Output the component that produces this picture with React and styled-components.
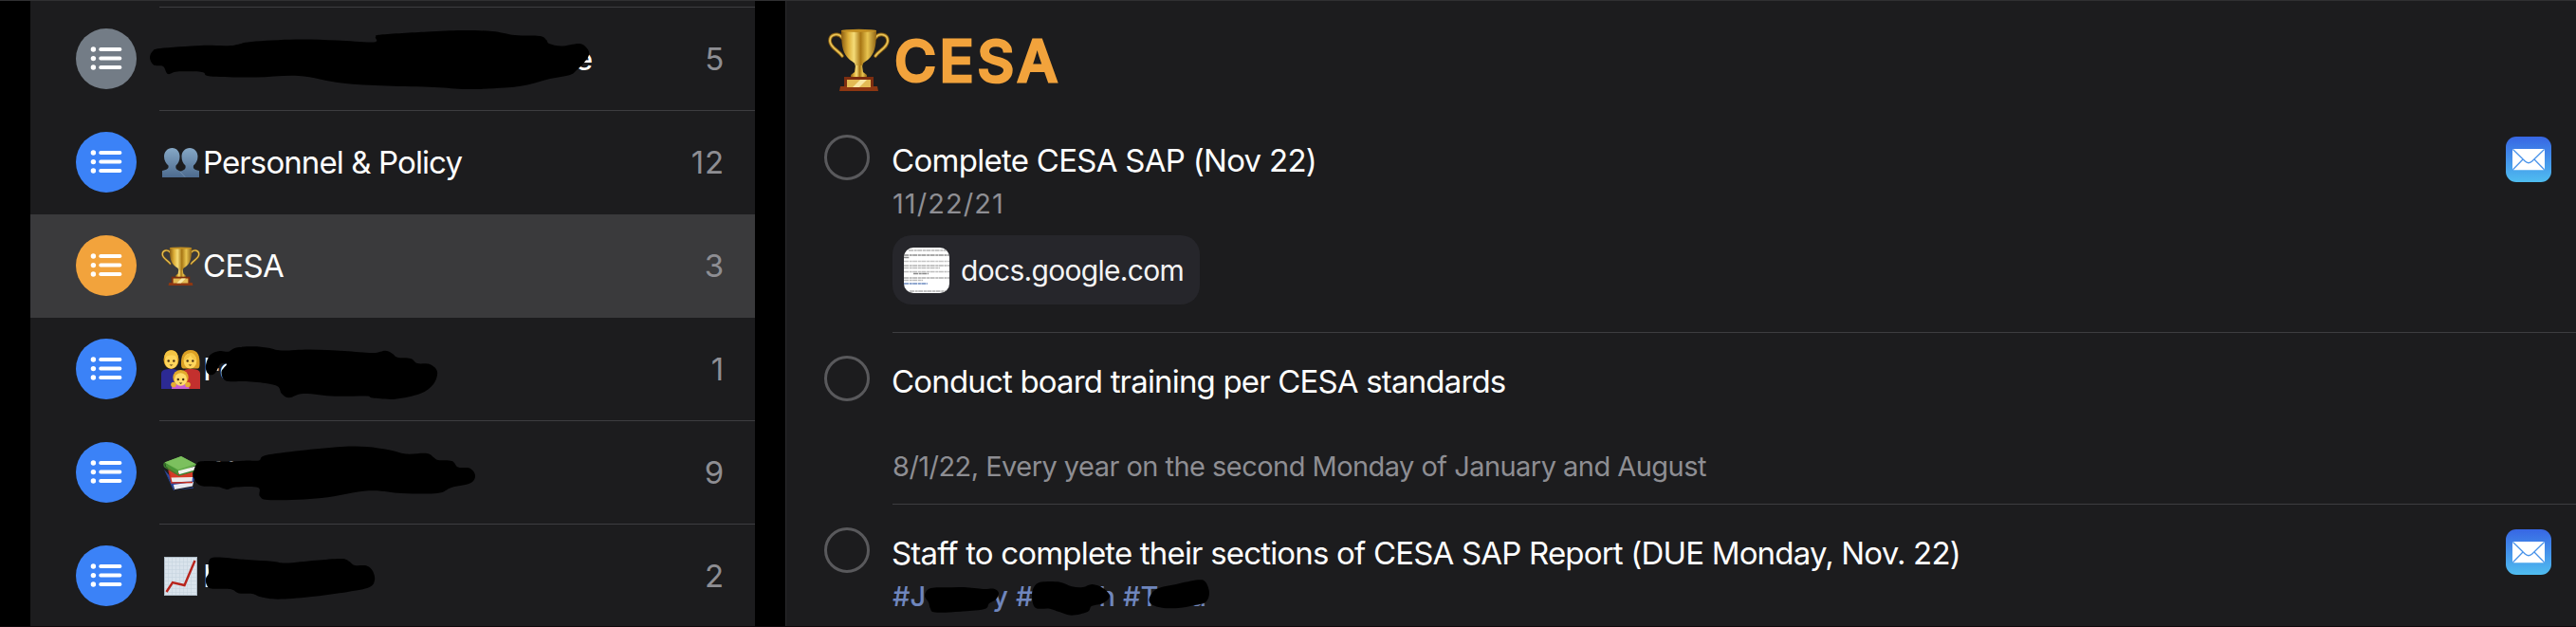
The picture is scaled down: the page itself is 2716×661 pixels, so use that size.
import React from 'react';
import styled, { createGlobalStyle, ThemeProvider } from 'styled-components';

const theme = {
  background: '#1c1c1e',
  selected: '#3a3a3c',
  line: '#3d3d40',
  grey: '#8e8e93',
  orange: '#f2a33c',
  blue: '#3b82f7',
  slate: '#737c86',
  tag: '#6f86bd',
};

const GlobalStyle = createGlobalStyle`
  * {
    box-sizing: border-box;
  }
  body {
    margin: 0;
    background-color: #000;
    font-family: Inter, "Liberation Sans", sans-serif;
    overflow: hidden;
  }
`;

const Flex = styled.div`
  display: flex;
  flex-direction: ${(props) => (props.$col ? 'column' : 'row')};
`;

const Screen = styled(Flex)`
  width: 100vw;
  height: 661px;
  overflow: hidden;
  padding-left: 32px;
  border-top: 1px solid #303032;
  border-bottom: 1px solid #0f080b;
`;

/* ---------- sidebar ---------- */

const Sidebar = styled(Flex)`
  flex: none;
  width: 764px;
  background-color: ${(props) => props.theme.background};
`;

const SidebarTop = styled.div`
  flex: none;
  height: 7px;
  margin-left: 136px;
  border-bottom: 1px solid ${(props) => props.theme.line};
`;

const ListRow = styled(Flex)`
  position: relative;
  flex: none;
  height: 109px;
  padding-left: 48px;
  background-color: ${(props) =>
    props.$selected ? props.theme.selected : 'transparent'};
`;

const ListBadge = styled(Flex)`
  flex: none;
  align-items: center;
  justify-content: center;
  width: 64px;
  height: 64px;
  margin-top: 22px;
  border-radius: 50%;
  background-color: ${(props) => props.theme[props.$color]};
`;

const ListBody = styled(Flex)`
  flex: 1;
  align-items: center;
  margin-left: 24px;
  padding: 0 32px 0 2px;
  border-bottom: 1px solid
    ${(props) => (props.$plain ? 'transparent' : props.theme.line)};
`;

const EmojiBox = styled.svg`
  flex: none;
  width: ${(props) => (props.$large ? '65px' : '41px')};
  height: ${(props) => (props.$large ? '66px' : '41px')};
`;

const ListName = styled.span`
  flex: 1;
  margin-left: ${(props) => (props.$indent ? `${props.$indent}px` : '3px')};
  font-size: 33px;
  letter-spacing: ${(props) => props.$spacing || '-0.9px'};
  white-space: nowrap;
  color: #fff;
`;

const Count = styled.span`
  font-size: 33px;
  letter-spacing: 0.8px;
  color: ${(props) => props.theme.grey};
`;

const Scribble = styled.svg`
  position: absolute;
  top: 0;
  left: 0;
  width: 764px;
  height: 109px;
`;

/* ---------- reminders ---------- */

const Main = styled(Flex)`
  flex: 1;
  margin-left: 32px;
  padding-left: 40px;
  border-left: 1px solid #29292b;
  background-color: ${(props) => props.theme.background};
`;

const Title = styled(Flex)`
  flex: none;
  align-items: center;
  height: 117px;
  padding: 6px 0 0 4px;
`;

const TitleText = styled.h1`
  margin: 2px 0 0 5px;
  font-size: 60px;
  font-weight: 500;
  line-height: 66px;
  letter-spacing: 3.6px;
  color: ${(props) => props.theme.orange};
  stroke-linejoin: round;
  -webkit-text-stroke: 3px ${(props) => props.theme.orange};
`;

const Reminder = styled(Flex)`
  flex: none;
`;

const Check = styled.div`
  flex: none;
  width: 48px;
  height: 48px;
  margin-top: 24px;
  border: 3px solid #59595c;
  border-radius: 50%;
`;

const ReminderBody = styled(Flex)`
  flex: 1;
  align-items: flex-start;
  margin-left: 24px;
  padding: 30px 0 ${(props) => props.$bottom} 0;
  border-bottom: 1px solid ${(props) => props.theme.line};
`;

const ReminderContent = styled(Flex)`
  flex: 1;
  align-items: flex-start;
`;

const ReminderTitle = styled.span`
  margin-left: -1px;
  font-size: 33px;
  line-height: 42px;
  letter-spacing: ${(props) => props.$spacing};
  white-space: nowrap;
  color: #fff;
`;

const Meta = styled.span`
  margin-top: ${(props) => (props.$gap ? '49px' : '5px')};
  font-size: 29px;
  line-height: 39px;
  letter-spacing: ${(props) => props.$spacing};
  white-space: nowrap;
  color: ${(props) => props.theme.grey};
`;

const LinkChip = styled(Flex)`
  align-items: center;
  width: 324px;
  height: 73px;
  margin-top: 14px;
  padding-left: 12px;
  border-radius: 20px;
  background-color: #26262b;
`;

const Thumbnail = styled.svg`
  width: 48px;
  height: 48px;
  border-radius: 10px;
  background-color: #fff;
`;

const LinkText = styled.span`
  margin-left: 12px;
  font-size: 30px;
  letter-spacing: -0.7px;
  color: #f4f4f5;
`;

const Tags = styled(Flex)`
  position: relative;
  margin-top: 5px;
  gap: 8px;
`;

const Tag = styled(Flex)`
  justify-content: space-between;
  width: ${(props) => props.$width};
  font-size: 29px;
  font-weight: 500;
  line-height: 39px;
  color: ${(props) => props.theme.tag};
`;

const TagScribble = styled.svg`
  position: absolute;
  top: -8px;
  left: 20px;
  width: 330px;
  height: 50px;
`;

const MailBadge = styled.svg`
  flex: none;
  width: 48px;
  height: 48px;
  margin: -4px 26px 0 0;
`;

/* Closed path drawn smoothly through a list of points. */
const smooth = (points) => {
  const n = points.length;
  let d = `M${points[0][0]} ${points[0][1]}`;
  points.forEach((p1, i) => {
    const p0 = points[(i + n - 1) % n];
    const p2 = points[(i + 1) % n];
    const p3 = points[(i + 2) % n];
    const a = [p1[0] + (p2[0] - p0[0]) / 6, p1[1] + (p2[1] - p0[1]) / 6];
    const b = [p2[0] - (p3[0] - p1[0]) / 6, p2[1] - (p3[1] - p1[1]) / 6];
    d += `C${a.map((v) => v.toFixed(1))} ${b.map((v) => v.toFixed(1))} ${p2}`;
  });
  return `${d}Z`;
};

const listScribbles = {
  first: [
    [158, 61], [161, 54], [169, 51], [212, 48], [243, 48], [265, 44], [312, 41.5],
    [355, 42.5], [394, 44.5], [396, 39], [402, 36.5], [450, 33.5], [487, 32],
    [519, 33], [543, 37], [569, 38], [576, 42], [579, 46], [592, 48.5],
    [611, 46], [619, 51], [621, 58], [615, 67], [609, 73], [601, 79],
    [580, 83], [556, 89.5], [532, 92.5], [492, 94], [458, 92], [408, 90.5],
    [360, 87.5], [315, 80], [270, 81.5], [222, 80.5], [213, 76], [187, 75.5],
    [177, 78], [172, 70], [162, 68.5],
  ],
  family: [
    [217, 385], [221.7, 374], [231.7, 370], [240.7, 370.7], [249, 366.5],
    [266.7, 365.3], [283, 366.7], [296.7, 369.5], [326.7, 368.5], [363, 370],
    [393, 372], [406.7, 369.7], [414, 373], [419, 376.7], [433, 378],
    [440, 383], [453, 384], [461, 391.7], [457, 405], [443, 415],
    [416.7, 420.7], [393, 419.5], [386, 417.5], [353, 417.7], [320, 415],
    [305, 419.3], [297, 415], [293, 407.5], [280, 404], [256.7, 402],
    [243, 402.3], [236, 400], [233.5, 391.7], [239, 384], [232.7, 383.5],
    [228, 391.7], [223.3, 395.3], [218.3, 392.7],
  ],
  books: [
    [204, 501.7], [207.3, 489], [215, 486], [240, 486.5], [260, 485.5],
    [273, 485.5], [280, 480], [316.7, 475], [360, 471], [386.7, 471],
    [410, 474.3], [428, 478.5], [450, 478], [457, 482], [462, 485],
    [476.5, 486], [483, 492.5], [495, 493.5], [501, 501], [496, 509.3],
    [476, 514], [461, 520], [423.5, 520], [389, 517.3], [339, 525],
    [286, 527.3], [274, 523.3], [272, 514], [249, 513.5], [239, 516],
    [230, 513.3], [211, 511.7],
  ],
  chart: [
    [217, 610], [220, 604], [220, 593], [226.7, 587.5], [260, 590],
    [286.7, 591.7], [301.7, 593.5], [333, 590.7], [360, 589], [368, 591.7],
    [374, 596], [386.7, 596.5], [393, 602], [395, 611.7], [389, 619.3],
    [366.7, 624], [326.7, 629.3], [293, 631.7], [275, 629.3], [266, 626],
    [252, 625.5], [243, 621], [223, 620.5], [218, 616.7],
  ],
};

const tagScribbles = [
  [
    [975, 628], [980, 620.5], [997, 619.3], [1016.7, 619], [1036.7, 621],
    [1048, 620.7], [1053, 625], [1050, 632], [1043, 636], [1038, 642],
    [1013, 644.7], [986, 645.5], [981, 641.7], [979, 635],
  ],
  [
    [1088, 628], [1090.7, 618], [1098, 613.5], [1116.7, 613.5], [1130, 618.3],
    [1141.7, 619], [1151.7, 616], [1163, 620], [1170, 628.3], [1163, 636],
    [1151, 639], [1146.7, 645], [1130, 648.7], [1116.7, 645], [1106.7, 641.7],
    [1091.7, 640.7],
  ],
  [
    [1212, 630], [1220, 620.7], [1240, 616], [1263, 611.3], [1271, 613.5],
    [1275, 625], [1271, 635], [1258, 638.3], [1245, 640.7], [1226.7, 641],
    [1214, 637],
  ],
];

function ListIcon() {
  return (
    <svg width="34" height="26" viewBox="0 0 34 26" fill="#fff">
      {[3, 12.6, 22].map((y) => (
        <g key={y}>
          <circle cx="3.4" cy={y} r="2.7" />
          <rect x="9.3" y={y - 2} width="24" height="4" rx="1.8" />
        </g>
      ))}
    </svg>
  );
}

function Trophy({ large }) {
  return (
    <EmojiBox viewBox="0 0 65 66" preserveAspectRatio="none" $large={large}>
      <defs>
        <linearGradient id="gold">
          <stop offset="0" stopColor="#8a5c10" />
          <stop offset="0.2" stopColor="#dcae38" />
          <stop offset="0.36" stopColor="#f5dc78" />
          <stop offset="0.55" stopColor="#a87614" />
          <stop offset="0.75" stopColor="#e8c450" />
          <stop offset="1" stopColor="#8f6313" />
        </linearGradient>
      </defs>
      <g fill="none" strokeLinecap="round">
        <path d="M15 10C11 4 2 6 2 13c0 7 9 10 13 16" stroke="#8f6415" strokeWidth="3.6" />
        <path d="M50 10C54 4 63 6 63 13c0 7-9 10-13 16" stroke="#8f6415" strokeWidth="3.6" />
        <path d="M15 10C11 4 2 6 2 13c0 7 9 10 13 16" stroke="#e8c355" strokeWidth="1.8" />
        <path d="M50 10C54 4 63 6 63 13c0 7-9 10-13 16" stroke="#e8c355" strokeWidth="1.8" />
      </g>
      <path d="M14 2h37c0 13-1 22-6 28-3 4-7 5-8 7l-1 3h-7l-1-3c-1-2-5-3-8-7-5-6-6-15-6-28z" fill="url(#gold)" />
      <ellipse cx="32.5" cy="2.4" rx="18.5" ry="1.6" fill="#c28f22" />
      <path d="M29 39h7l1 7 4 3v3H24v-3l4-3z" fill="url(#gold)" />
      <path d="M17 51h31v10H17z" fill="#7c2d10" />
      <path d="M13 61h39l1 5H12z" fill="#8d3712" />
      <path d="M20 54h25v8H20z" fill="#e3bb55" />
      <path d="M26 62l8-8h7l-8 8z" fill="#f8e7a4" />
    </EmojiBox>
  );
}

function People() {
  return (
    <EmojiBox viewBox="0 0 41 41">
      <defs>
        <linearGradient id="bust" x2="0" y2="1">
          <stop offset="0" stopColor="#86a8c6" />
          <stop offset="1" stopColor="#4d6b8f" />
        </linearGradient>
      </defs>
      <path
        d="M11.5 5c5 0 8 4 8 9 0 4-1.500 7.500-4 9.500-.5 3 0 4.500 5 6 5-1.500 5.500-3 5-6-2.500-2-4-5.500-4-9.500 0-5 3.500-9 8.500-9s8.500 4 8.500 9c0 4-2 7.500-4.500 9.500-.5 3 0 4 6 5.500v7H1v-7c6-1.500 7-2.500 6.500-5.500C5 21.500 3 18 3 14c0-5 3.500-9 8.500-9z"
        fill="url(#bust)"
      />
      <path d="M20 30l5 5.500" stroke="#7894b3" strokeWidth="0.8" />
    </EmojiBox>
  );
}

function Family() {
  return (
    <EmojiBox viewBox="0 0 41 41">
      <path d="M0 41V25c0-4 4-5 10-5s9 2 10.500 5v16z" fill="#2c2a93" />
      <path d="M41 41V25c0-4-4-5-10-5s-9 2-10.500 5v16z" fill="#c3302e" />
      <ellipse cx="10.5" cy="10" rx="8" ry="10" fill="#d99e22" />
      <ellipse cx="10.5" cy="11.5" rx="6.8" ry="8" fill="#ffd65c" />
      <path d="M3.500 9C3 3 6 .5 10.500.5S18 3 17.500 9C15 6 14 5 10 5.500 6 6 4.500 7 3.500 9z" fill="#f3c444" />
      <path d="M31 0c8 0 9.500 7 9.500 13 0 4 0 6-2 6.500H23c-2-.5-2-3-2-6.500C21 7 23 0 31 0z" fill="#dba024" />
      <ellipse cx="30.5" cy="11.5" rx="6.8" ry="8" fill="#ffd65c" />
      <path d="M23.500 11c1-5 4-7 8.500-8 3 1 5 4 5.500 8C33 10 31 7 31 5c-1 3-4 5-7.500 6z" fill="#f3c444" />
      <path d="M11 41c0-4 3-6 9.500-6s9 2 9 6z" fill="#c55ed0" />
      <circle cx="13" cy="36.5" r="2.8" fill="#e8ae30" />
      <circle cx="28" cy="36.5" r="2.8" fill="#e8ae30" />
      <ellipse cx="20.5" cy="29" rx="8.2" ry="8" fill="#e2aa2c" />
      <ellipse cx="20.5" cy="31" rx="6.6" ry="6.8" fill="#ffdb6c" />
      <g fill="#4b3011">
        <circle cx="7.7" cy="11.5" r="1.2" />
        <circle cx="13.3" cy="11.5" r="1.2" />
        <circle cx="27.7" cy="11.5" r="1.2" />
        <circle cx="33.3" cy="11.5" r="1.2" />
        <circle cx="17.8" cy="31" r="1.2" />
        <circle cx="23.2" cy="31" r="1.2" />
        <path d="M8.500 15.500h4l-2 1.200zM28.500 15.500h4l-2 1.200zM18.800 34.500h3.600l-1.800 1.500z" />
      </g>
    </EmojiBox>
  );
}

function Books() {
  return (
    <EmojiBox viewBox="0 0 41 41">
      <path d="M3 17l10 11 21-3 1 2-2 6-20 3z" fill="#2c4ba5" />
      <path d="M13 33l21-3-1 4.500-19 3.500z" fill="#e8eaf2" />
      <path d="M3 17l10 19 1 3 20-3.500v1L13 39z" fill="#2c4ba5" />
      <path d="M7 15l3 12 23-1v-8z" fill="#d43b27" />
      <path d="M10 25.500l23-.5-.5 4.500-22 1z" fill="#eceaea" />
      <path d="M8 18l3 13 22-.5" stroke="#c22e20" strokeWidth="1.3" fill="none" />
      <path d="M3.500 9.500L21 3l16 8.500v1l-19.500 8z" fill="#64ad4a" />
      <path d="M3.500 9.500L21 3l15 8-18 6z" fill="#7cc05e" />
      <path d="M17.500 18.500l19-5-.5 4.500-16.500 5z" fill="#eef3ec" />
      <path d="M3.500 10c-1 2 0 4 1.500 5l13.500 8 18-5" stroke="#3b7f2c" strokeWidth="1.4" fill="none" />
      <path d="M4 10l14 8v4L5 14z" fill="#4a9636" />
    </EmojiBox>
  );
}

function Chart() {
  return (
    <EmojiBox viewBox="0 0 41 41">
      <rect x="3.5" y="0.5" width="34" height="40" fill="#d9e3ec" stroke="#aebbc6" />
      <path
        d="M7.500 1v39M11.500 1v39M15.500 1v39M19.500 1v39M23.500 1v39M27.500 1v39M31.500 1v39M4 5.500h33M4 9.500h33M4 13.500h33M4 17.500h33M4 21.500h33M4 25.500h33M4 29.500h33M4 33.500h33M4 37.500h33"
        stroke="#c6d3df"
        strokeWidth="0.6"
      />
      <path d="M5.500 37l6.500-10 12.500 3L35.500 4" fill="none" stroke="#b8241c" strokeWidth="2.4" />
    </EmojiBox>
  );
}

function MailIcon() {
  return (
    <MailBadge viewBox="0 0 48 48">
      <defs>
        <linearGradient id="mail" x2="0" y2="1">
          <stop offset="0" stopColor="#3766e4" />
          <stop offset="1" stopColor="#4fbdf0" />
        </linearGradient>
      </defs>
      <rect width="48" height="48" rx="11" fill="url(#mail)" />
      <rect x="7" y="13" width="34" height="22.2" rx="1.4" fill="#fff" />
      <g fill="none" stroke="#4a94ea" strokeWidth="1.3">
        <path d="M7.500 13.500L20 25.800c2.700 2.600 5.300 2.600 8 0L40.500 13.500" />
        <path d="M7.500 34.700L18 24M40.500 34.700L30 24" />
      </g>
    </MailBadge>
  );
}

const thumbLines = [
  [5, 3, 40, '#b4b4b4'],
  [0, 8, 48, '#8d8d8d'],
  [0, 10.5, 6, '#8d8d8d'],
  [0, 14.5, 48, '#c4c4c4'],
  [0, 19, 48, '#b2b2b2'],
  [0, 21.5, 38, '#bcbcbc'],
  [0, 25.5, 48, '#bdbdbd'],
  [10, 27.5, 16, '#8a8a8a'],
  [0, 32, 48, '#adadad'],
  [0, 34.5, 20, '#bcbcbc'],
  [0, 38, 25, '#6c8ac0'],
  [6, 46, 42, '#b0b0b0'],
];

function DocThumbnail() {
  return (
    <Thumbnail viewBox="0 0 48 48">
      {thumbLines.map(([x, y, width, color]) => (
        <path
          key={y}
          d={`M${x} ${y}h${width}`}
          stroke={color}
          strokeWidth="1.6"
          strokeDasharray="5 0.7 3 0.5"
        />
      ))}
    </Thumbnail>
  );
}

const lists = [
  { id: 'first', color: 'slate', name: 'e', indent: 436, count: 5 },
  { id: 'people', color: 'blue', Emoji: People, name: 'Personnel & Policy', count: 12, plain: true },
  { id: 'cesa', color: 'orange', Emoji: Trophy, name: 'CESA', spacing: '-0.7px', count: 3, selected: true, plain: true },
  { id: 'family', color: 'blue', Emoji: Family, name: 'Fo', count: 1 },
  { id: 'books', color: 'blue', Emoji: Books, name: 'W', count: 9 },
  { id: 'chart', color: 'blue', Emoji: Chart, name: 'E', count: 2 },
];

function ListItem({ list, top }) {
  const { id, color, Emoji, name, indent, spacing, count, selected, plain } = list;
  return (
    <ListRow $selected={selected}>
      <ListBadge $color={color}>
        <ListIcon />
      </ListBadge>
      <ListBody $plain={plain}>
        {Emoji && <Emoji />}
        <ListName $indent={indent} $spacing={spacing}>
          {name}
        </ListName>
        <Count>{count}</Count>
      </ListBody>
      {listScribbles[id] && (
        <Scribble viewBox={`32 ${top} 764 109`}>
          <path d={smooth(listScribbles[id])} />
        </Scribble>
      )}
    </ListRow>
  );
}

export default function App() {
  return (
    <ThemeProvider theme={theme}>
      <GlobalStyle />
      <Screen>
        <Sidebar $col>
          <SidebarTop />
          {lists.map((list, i) => (
            <ListItem key={list.id} list={list} top={8 + i * 109} />
          ))}
        </Sidebar>
        <Main $col>
          <Title>
            <Trophy large />
            <TitleText>CESA</TitleText>
          </Title>
          <Reminder>
            <Check />
            <ReminderBody $bottom="29px">
              <ReminderContent $col>
                <ReminderTitle $spacing="-0.72px">Complete CESA SAP (Nov 22)</ReminderTitle>
                <Meta $spacing="1.06px">11/22/21</Meta>
                <LinkChip>
                  <DocThumbnail />
                  <LinkText>docs.google.com</LinkText>
                </LinkChip>
              </ReminderContent>
              <MailIcon />
            </ReminderBody>
          </Reminder>
          <Reminder>
            <Check />
            <ReminderBody $bottom="20px">
              <ReminderContent $col>
                <ReminderTitle $spacing="-0.83px">Conduct board training per CESA standards</ReminderTitle>
                <Meta $gap $spacing="-0.54px">
                  8/1/22, Every year on the second Monday of January and August
                </Meta>
              </ReminderContent>
            </ReminderBody>
          </Reminder>
          <Reminder>
            <Check />
            <ReminderBody $bottom="20px">
              <ReminderContent $col>
                <ReminderTitle $spacing="-0.82px">
                  Staff to complete their sections of CESA SAP Report (DUE Monday, Nov. 22)
                </ReminderTitle>
                <Tags>
                  <Tag $width="122px">
                    <span>#J</span>
                    <span>y</span>
                  </Tag>
                  <Tag $width="105px">
                    <span>#</span>
                    <span>h</span>
                  </Tag>
                  <Tag $width="88px">
                    <span>#T</span>
                    <span>d</span>
                  </Tag>
                  <TagScribble viewBox="961 601 330 50">
                    {tagScribbles.map((points) => (
                      <path key={points[0][0]} d={smooth(points)} />
                    ))}
                  </TagScribble>
                </Tags>
              </ReminderContent>
              <MailIcon />
            </ReminderBody>
          </Reminder>
        </Main>
      </Screen>
    </ThemeProvider>
  );
}
